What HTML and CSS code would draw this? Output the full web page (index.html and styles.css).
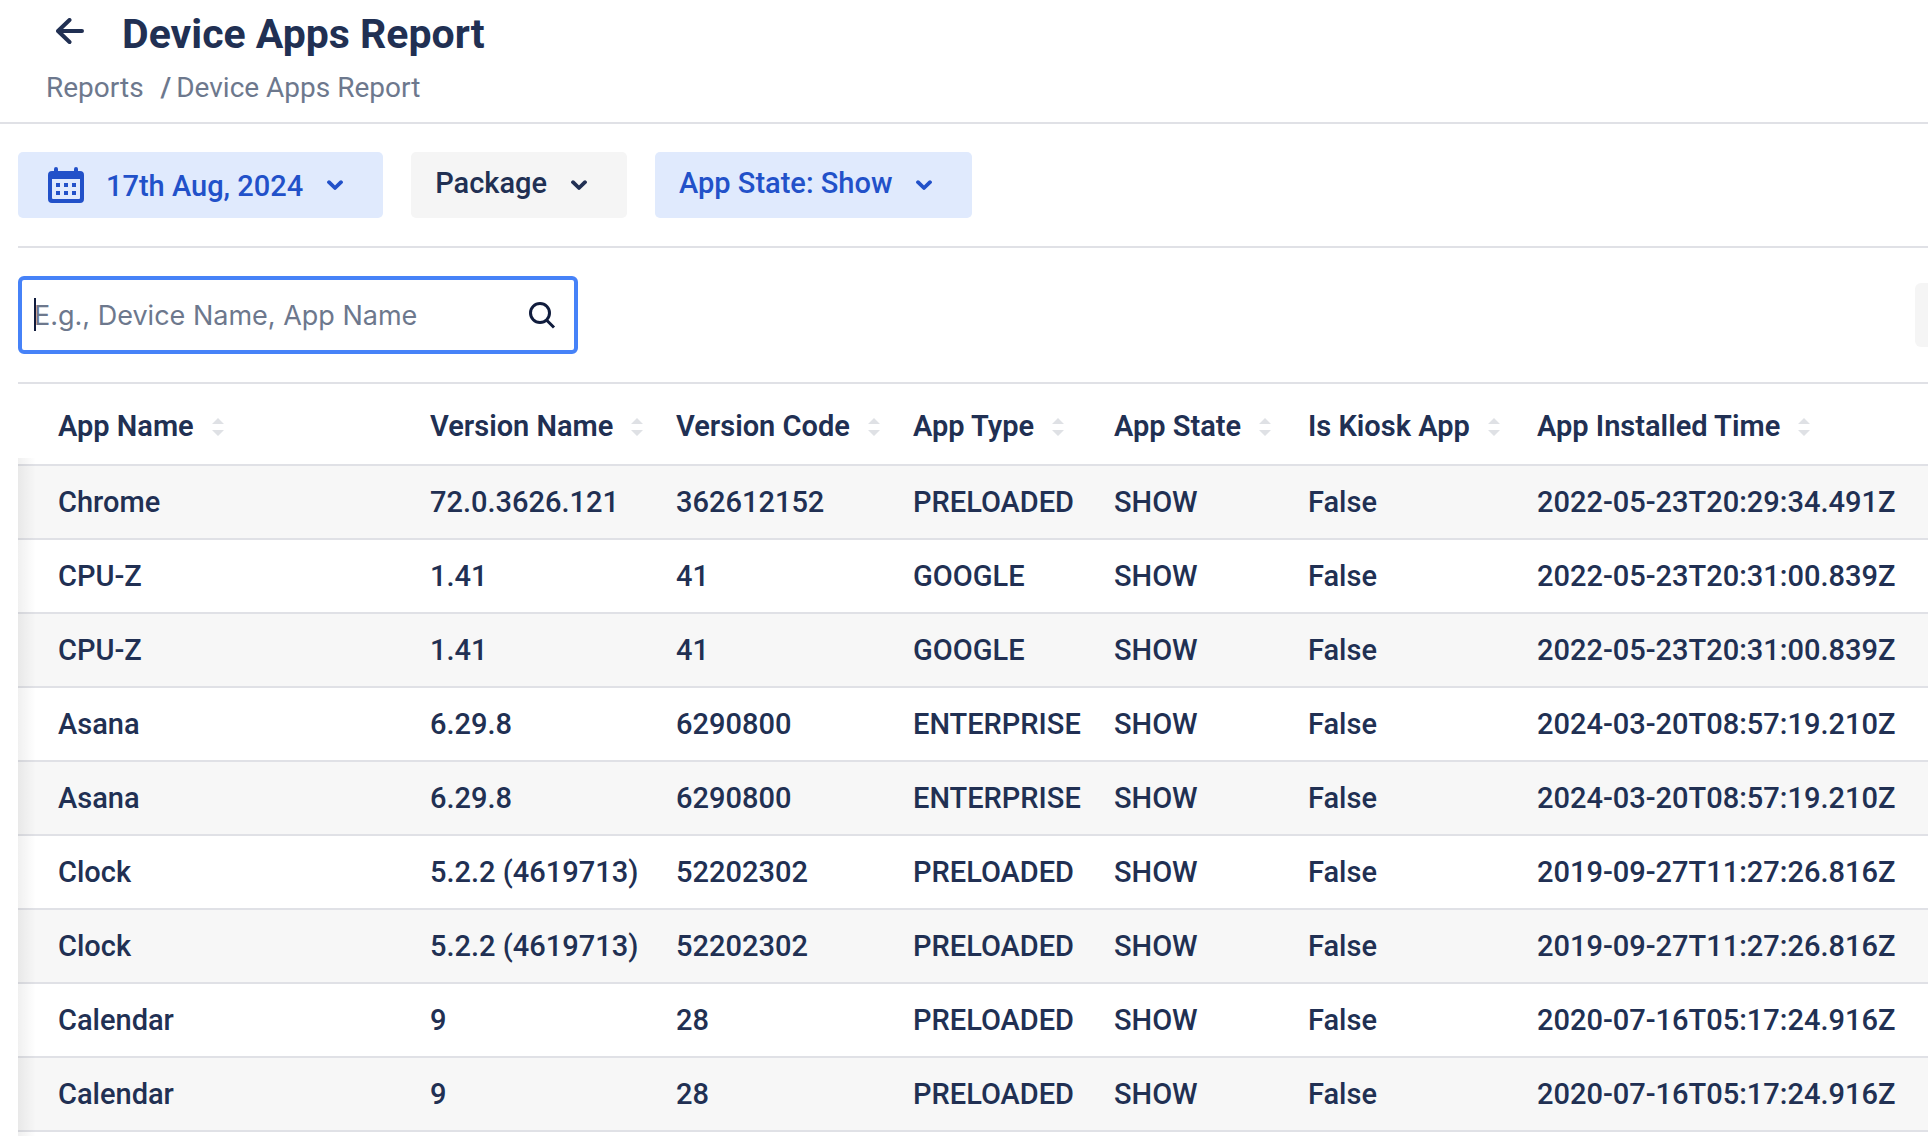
FILE: index.html
```
<!DOCTYPE html>
<html lang="en">
<head>
  <meta charset="UTF-8">
  <meta name="viewport" content="width=device-width, initial-scale=1.0">
  <title>Device Apps Report</title>
  <link rel="stylesheet" href="styles.css">
</head>
<body>
  <!-- shared icons -->
  <svg class="sprite" aria-hidden="true">
    <symbol id="chevron" viewBox="0 0 16 10">
      <path d="M2 2.2 8 8 14 2.2" fill="none" stroke="currentColor" stroke-width="3.8" stroke-linecap="round" stroke-linejoin="round"/>
    </symbol>
    <symbol id="sort" viewBox="0 0 12 18">
      <path d="M0 6 6 0 12 6ZM0 12H12L6 18Z" fill="currentColor"/>
    </symbol>
  </svg>

  <header class="page-header">
    <div class="title-row">
      <a href="#" class="back" aria-label="Back">
        <svg width="28" height="26" viewBox="0 0 28 26"><path d="M13.5 2 2 13 13.5 24M2.5 13H26" fill="none" stroke="currentColor" stroke-width="4" stroke-linecap="round" stroke-linejoin="round"/></svg>
      </a>
      <h1>Device Apps Report</h1>
    </div>
    <nav class="breadcrumb">
      <a href="#">Reports</a>
      <span class="slash">/</span>
      <span>Device Apps Report</span>
    </nav>
  </header>

  <main class="content">
    <div class="filters">
      <button type="button" class="filter date active">
        <svg width="36" height="36" viewBox="0 0 36 36">
          <path fill="currentColor" fill-rule="evenodd" d="M6 4V2a2 2 0 0 1 4 0V4H26V2a2 2 0 0 1 4 0V4H32a4 4 0 0 1 4 4V32a4 4 0 0 1-4 4H4a4 4 0 0 1-4-4V8a4 4 0 0 1 4-4ZM4 12V31a1 1 0 0 0 1 1H31a1 1 0 0 0 1-1V12Z"/>
          <path fill="currentColor" d="M8 16h4v4H8zM16 16h4v4h-4zM24 16h4v4h-4zM8 24h4v4H8zM16 24h4v4h-4zM24 24h4v4h-4z"/>
        </svg>
        <span>17th Aug, 2024</span>
        <svg class="chevron"><use href="#chevron"/></svg>
      </button>
      <button type="button" class="filter">
        <span>Package</span>
        <svg class="chevron"><use href="#chevron"/></svg>
      </button>
      <button type="button" class="filter active">
        <span>App State: Show</span>
        <svg class="chevron"><use href="#chevron"/></svg>
      </button>
    </div>

    <div class="toolbar">
      <div class="search">
        <input type="text" id="search" aria-label="Search" placeholder="E.g., Device Name, App Name">
        <span class="caret"></span>
        <svg width="28" height="28" viewBox="0 0 28 28"><path d="M12 2.5a9.5 9.5 0 1 0 0 19a9.5 9.5 0 1 0 0-19ZM18.5 19 26 26.5" fill="none" stroke="currentColor" stroke-width="3"/></svg>
      </div>
      <button type="button" class="more" aria-label="Actions"></button>
    </div>

    <div class="table-wrap">
      <table>
        <colgroup>
          <col class="c-name"><col class="c-version"><col class="c-code"><col class="c-type"><col class="c-state"><col class="c-kiosk"><col>
        </colgroup>
        <thead>
          <tr>
            <th>App Name<svg class="sort"><use href="#sort"/></svg></th>
            <th>Version Name<svg class="sort"><use href="#sort"/></svg></th>
            <th>Version Code<svg class="sort"><use href="#sort"/></svg></th>
            <th>App Type<svg class="sort"><use href="#sort"/></svg></th>
            <th>App State<svg class="sort"><use href="#sort"/></svg></th>
            <th>Is Kiosk App<svg class="sort"><use href="#sort"/></svg></th>
            <th>App Installed Time<svg class="sort"><use href="#sort"/></svg></th>
          </tr>
        </thead>
        <tbody>
          <tr><td>Chrome</td><td>72.0.3626.121</td><td>362612152</td><td>PRELOADED</td><td>SHOW</td><td>False</td><td>2022-05-23T20:29:34.491Z</td></tr>
          <tr><td>CPU-Z</td><td>1.41</td><td>41</td><td>GOOGLE</td><td>SHOW</td><td>False</td><td>2022-05-23T20:31:00.839Z</td></tr>
          <tr><td>CPU-Z</td><td>1.41</td><td>41</td><td>GOOGLE</td><td>SHOW</td><td>False</td><td>2022-05-23T20:31:00.839Z</td></tr>
          <tr><td>Asana</td><td>6.29.8</td><td>6290800</td><td>ENTERPRISE</td><td>SHOW</td><td>False</td><td>2024-03-20T08:57:19.210Z</td></tr>
          <tr><td>Asana</td><td>6.29.8</td><td>6290800</td><td>ENTERPRISE</td><td>SHOW</td><td>False</td><td>2024-03-20T08:57:19.210Z</td></tr>
          <tr><td>Clock</td><td>5.2.2 (4619713)</td><td>52202302</td><td>PRELOADED</td><td>SHOW</td><td>False</td><td>2019-09-27T11:27:26.816Z</td></tr>
          <tr><td>Clock</td><td>5.2.2 (4619713)</td><td>52202302</td><td>PRELOADED</td><td>SHOW</td><td>False</td><td>2019-09-27T11:27:26.816Z</td></tr>
          <tr><td>Calendar</td><td>9</td><td>28</td><td>PRELOADED</td><td>SHOW</td><td>False</td><td>2020-07-16T05:17:24.916Z</td></tr>
          <tr><td>Calendar</td><td>9</td><td>28</td><td>PRELOADED</td><td>SHOW</td><td>False</td><td>2020-07-16T05:17:24.916Z</td></tr>
        </tbody>
      </table>
    </div>
  </main>
</body>
</html>
```
FILE: styles.css
```
* { box-sizing: border-box; }
body {
  margin: 0;
  min-height: 100vh;
  display: flex;
  flex-direction: column;
  background: #fff;
  color: #213053;
  font-family: Roboto, "Noto Sans", sans-serif;
  font-size: 29px;
  line-height: 36px;
}
.sprite { position: absolute; width: 0; height: 0; }
svg { flex: none; }

.page-header {
  padding: 8px 46px 16px;
  border-bottom: 2px solid #e0e1e6;
}
.title-row { display: flex; align-items: center; gap: 38px; padding-left: 10px; }
.back { display: flex; color: inherit; padding-bottom: 6px; }
h1 { margin: 0; font-size: 41px; line-height: 52px; font-weight: 700; }
.breadcrumb {
  display: flex;
  margin-top: 10px;
  font-size: 28px;
  color: #6d788d;
}
.breadcrumb a { color: inherit; text-decoration: none; }
.slash { margin: 0 5px 0 17px; font-weight: 600; }

.content {
  flex: 1;
  display: flex;
  flex-direction: column;
  margin-left: 18px;
}
.filters {
  display: flex;
  gap: 28px;
  padding: 28px 0;
  border-bottom: 2px solid #e0e1e6;
}
.filter {
  display: flex;
  align-items: center;
  gap: 22px;
  height: 66px;
  padding: 0 40px 0 24px;
  border: none;
  border-radius: 5px;
  background: #f5f5f5;
  color: inherit;
  font: inherit;
  font-weight: 500;
  cursor: pointer;
}
.filter span { padding-bottom: 4px; }
.filter.active { background: #e0eafd; color: #2251c9; }
.filter.date { padding-left: 30px; }
.filter.date span { padding: 2px 0 0; }
.chevron { width: 16px; height: 10px; margin-left: 2px; }

.toolbar {
  display: flex;
  align-items: center;
  justify-content: space-between;
  padding: 28px 0;
  border-bottom: 2px solid #e0e1e6;
}
.search {
  position: relative;
  display: flex;
  align-items: center;
  width: 560px;
  height: 78px;
  padding: 0 18px 0 12px;
  border: 4px solid #4682f8;
  border-radius: 6px;
  color: #101c3d;
}
.search input {
  flex: 1;
  min-width: 0;
  padding: 0;
  border: none;
  outline: none;
  background: none;
  color: inherit;
  font-family: Inter, sans-serif;
  font-size: 27px;
}
.search input::placeholder { color: #6d788d; opacity: 1; }
.caret {
  position: absolute;
  left: 12px;
  top: 18px;
  width: 2px;
  height: 33px;
  background: #101c3d;
}
.more {
  width: 13px;
  height: 64px;
  padding: 0;
  border: none;
  border-radius: 6px 0 0 6px;
  background: #f5f5f5;
}

.table-wrap { position: relative; flex: 1; padding-bottom: 4px; }
.table-wrap::after {
  content: "";
  position: absolute;
  left: 0;
  top: 74px;
  bottom: 0;
  width: 18px;
  background: linear-gradient(to right, rgba(0,0,0,0.06), rgba(0,0,0,0));
}
table { width: 100%; table-layout: fixed; border-collapse: separate; border-spacing: 0; }
.c-name { width: 396px; }
.c-version { width: 246px; }
.c-code { width: 237px; }
.c-type { width: 201px; }
.c-state { width: 194px; }
.c-kiosk { width: 229px; }
th, td {
  padding: 18px 0 18px 16px;
  border-bottom: 2px solid #e0e1e6;
  text-align: left;
  white-space: nowrap;
  font-weight: 500;
}
th { padding-top: 24px; padding-bottom: 20px; font-weight: 600; }
th:first-child, td:first-child { padding-left: 40px; }
tbody tr:nth-child(odd) { background: #f7f7f7; }
.sort { width: 12px; height: 18px; margin-left: 18px; color: #dfe1e5; }
```
